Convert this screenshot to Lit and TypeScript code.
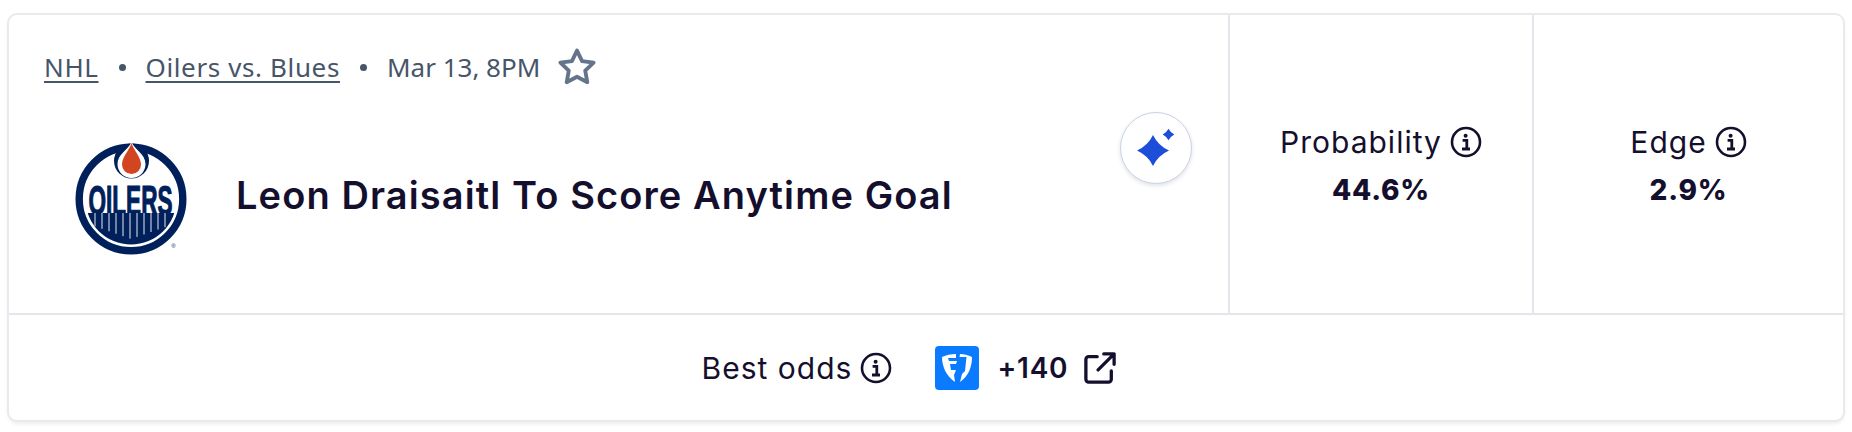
import { LitElement, html, css, svg } from "lit";
import { customElement } from "lit/decorators.js";

const info = html`<svg class="info" viewBox="0 0 32 32" fill="none">
  <circle cx="16" cy="16" r="14" stroke="#150f2e" stroke-width="2.6"/>
  <circle cx="15.6" cy="9.8" r="2" fill="#150f2e"/>
  <path d="M12.6 14.4h4.2v8.200M12 23h8" stroke="#150f2e" stroke-width="2.8" fill="none"/>
</svg>`;

const stripes = [24, 31, 38, 45, 52, 59, 66, 73, 80, 87, 94];

@customElement("app-root")
export class AppRoot extends LitElement {
  static styles = css`
    :host { display: block; width: 1852px; height: 432px; background: #fff; box-sizing: border-box; padding: 15px 9px 12px; font-family: Inter, "Liberation Sans", sans-serif; color: #150f2e; }
    .card { height: 405px; box-sizing: border-box; border-radius: 8px; background: #fff; box-shadow: 0 0 0 2px #e8eaee, 0 3px 5px rgba(15, 23, 42, .1); display: flex; flex-direction: column; }
    .top { height: 298px; display: flex; border-bottom: 2px solid #e4e6ec; }
    .main { width: 1219px; box-sizing: border-box; padding: 33px 36px 0 35px; position: relative; }
    .crumbs { display: flex; align-items: center; height: 38px; font-family: "Noto Sans", sans-serif; font-size: 26px; color: #475569; }
    .crumbs a { color: #475569; letter-spacing: .62px; text-decoration: underline; text-underline-offset: 4px; text-decoration-thickness: 2px; }
    .dot { width: 7px; height: 7px; border-radius: 50%; background: #475569; margin: 0 20px; }
    .star { width: 42px; height: 42px; margin-left: 16px; }
    .body { display: flex; align-items: center; margin-top: 53px; gap: 45px; padding-left: 27px; }
    .logo { width: 120px; height: 120px; flex: none; }
    h1 { margin: 0 0 8px; font-size: 38px; font-weight: 600; letter-spacing: 1.1px; color: #150f2e; white-space: nowrap; }
    .ai { position: absolute; left: 1111px; top: 97px; width: 72px; height: 72px; box-sizing: border-box; border-radius: 50%; border: 1.5px solid #c8d3e4; background: #fff; box-shadow: 0 2px 4px rgba(15, 23, 42, .12); display: flex; align-items: center; justify-content: center; }
    .ai svg { width: 40px; height: 40px; }
    .stat { display: flex; flex-direction: column; align-items: center; padding-top: 109px; box-sizing: border-box; border-left: 2px solid #e4e6ec; }
    .stat.p { width: 304px; }
    .stat.e { flex: 1; }
    .label { display: flex; align-items: center; gap: 8px; font-size: 30px; line-height: 36px; letter-spacing: 1px; }
    .info { width: 32px; height: 32px; flex: none; }
    .value { font-size: 28px; font-weight: 800; line-height: 36px; margin-top: 12px; letter-spacing: .8px; }
    .bottom { flex: 1; display: flex; align-items: center; justify-content: center; padding-right: 34px; }
    .fd { width: 44px; height: 44px; margin-left: 43px; flex: none; }
    .odds { font-size: 28px; font-weight: 600; margin-left: 18px; letter-spacing: .8px; }
    .ext { width: 32px; height: 32px; margin-left: 16px; flex: none; }
  `;

  render() {
    return html`<div class="card">
      <div class="top">
        <div class="main">
          <div class="crumbs">
            <a>NHL</a><span class="dot"></span><a>Oilers vs. Blues</a><span class="dot"></span><span>Mar 13, 8PM</span>
            <svg class="star" viewBox="0 0 24 24" fill="none" stroke="#64748b" stroke-width="2.200" stroke-linejoin="round"><path d="M12 2.600l2.900 6 6.600.9-4.800 4.600 1.200 6.600L12 17.600l-5.900 3.100 1.200-6.600L2.500 9.500l6.600-.9z"/></svg>
          </div>
          <div class="body">
            <svg class="logo" viewBox="0 0 120 120">
              <defs><clipPath id="c"><circle cx="60" cy="60" r="45.500"/></clipPath></defs>
              <circle cx="60" cy="60" r="51.800" fill="none" stroke="#00205b" stroke-width="7.400"/>
              <circle cx="60.500" cy="22" r="17.500" fill="#00205b"/>
              <path d="M60.500 3C58 10 46.500 15 46.500 25a14 14 0 0 0 28 0C74.500 15 63 10 60.500 3z" fill="#fff"/>
              <path d="M60.500 4C58.500 11 51 18 51 25.500a9.500 9.500 0 0 0 19 0C70 18 62.500 11 60.500 4z" fill="#d14520"/>
              <text transform="translate(59.500 76) scale(.525 1)" text-anchor="middle" font-family="Liberation Sans" font-weight="700" font-size="43" fill="#00205b" stroke="#00205b" stroke-width="1.200">OILERS</text>
              <g clip-path="url(#c)">
                <rect x="16" y="74" width="88" height="36" fill="#00205b"/>
                ${stripes.map((x) => svg`<path d="M${x} 74V${100 - Math.abs(x - 60) * .35}" stroke="#fff" stroke-width=".9"/>`)}
              </g>
              <text x="102.500" y="109" text-anchor="middle" font-family="Liberation Sans" font-size="6" fill="#00205b">®</text>
            </svg>
            <h1>Leon Draisaitl To Score Anytime Goal</h1>
          </div>
          <div class="ai"><svg viewBox="0 0 40 40" fill="#1d4ed8"><path d="M17 7Q22 17.500 33 22.500 22 27.500 17 38 12 27.500 1 22.500 12 17.500 17 7z"/><path d="M32.500 .7Q34.500 4.500 38.300 6.500 34.500 8.500 32.500 12.300 30.500 8.500 26.700 6.500 30.500 4.500 32.500 .7z"/></svg></div>
        </div>
        <div class="stat p"><div class="label">Probability ${info}</div><div class="value">44.6%</div></div>
        <div class="stat e"><div class="label">Edge ${info}</div><div class="value">2.9%</div></div>
      </div>
      <div class="bottom">
        <div class="label">Best odds ${info}</div>
        <svg class="fd" viewBox="0 0 44 44">
          <rect width="44" height="44" rx="4" fill="#0a7aff"/>
          <path d="M21 8C16 8 11 9 7 11c0 9 4 19 13 25l-1-7 2-5h-5l-1-6h6l1-3h-8l-1-3h8zM25 8c4 0 8 1 12 3 0 9-3 19-12 25l2-8 3-3 1.500-14h-7z" fill="#fff"/>
        </svg>
        <div class="odds">+140</div>
        <svg class="ext" viewBox="0 0 34 34" fill="none" stroke="#150f2e" stroke-width="3.500" stroke-linecap="round" stroke-linejoin="round"><path d="M14 5H5a3 3 0 0 0-3 3v21a3 3 0 0 0 3 3h21a3 3 0 0 0 3-3v-9"/><path d="M21 2h11v11M32 2L15 19"/></svg>
      </div>
    </div>`;
  }
}
